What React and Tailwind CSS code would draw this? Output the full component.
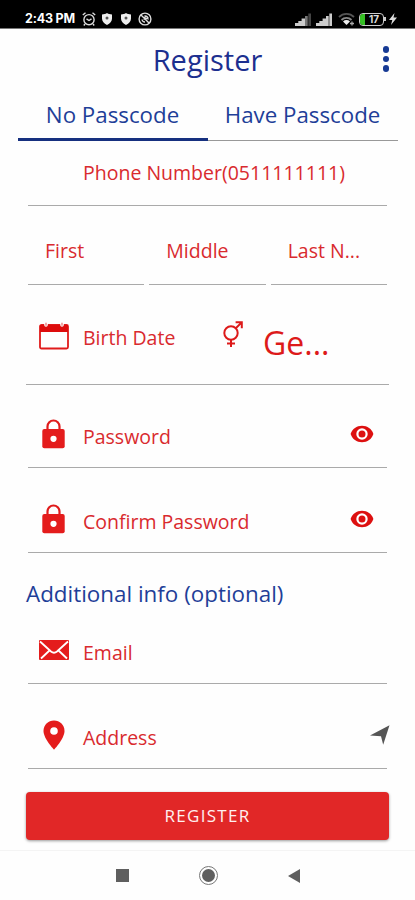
import React from 'react';
import { clsx } from 'clsx';

const CalendarIcon = () => (
  <svg viewBox="0 0 30 28" className="h-7 w-[30px]" fill="none">
    <rect x="1" y="3" width="28" height="23.5" rx="1.5" stroke="#e01b1b" strokeWidth="1.8" />
    <path d="M1 3h28v7H1z" fill="#dd0c0c" />
    <path d="M7 1v2M23 1v2" stroke="#fff" strokeWidth="3.6" strokeLinecap="round" />
    <path d="M7 1.2v2M23 1.2v2" stroke="#e46a6a" strokeWidth="1.2" strokeLinecap="round" />
  </svg>
);

const GenderIcon = () => (
  <svg viewBox="0 0 20 26" className="h-[26px] w-5" fill="none" stroke="#dd1a1a" strokeWidth="2">
    <circle cx="8" cy="12" r="6.7" />
    <path d="M12.8 7.2 18.4 1.6M12.6 1.2h6.2v6M8 18.8V26M4 22.5h8" />
  </svg>
);

const LockIcon = () => (
  <svg viewBox="0 0 23 30" className="h-[30px] w-[23px]">
    <path d="M5.5 11V7.5a6 6 0 0 1 12 0V11" fill="none" stroke="#e01b1b" strokeWidth="2.2" />
    <rect x="0.3" y="10" width="22.4" height="19.2" rx="2" fill="#e41c1c" />
    <circle cx="11.5" cy="19.8" r="3.1" fill="#fff" />
  </svg>
);

const EyeIcon = () => (
  <svg viewBox="0 0 24 18" className="h-[18px] w-6">
    <path d="M12 .8C6.6.8 2.4 3.8.6 9c1.800 5.200 6 8.200 11.400 8.200s9.600-3 11.400-8.200C21.600 3.800 17.400.8 12 .8z" fill="#dd1010" />
    <circle cx="12" cy="9" r="4.600" fill="#dd1010" stroke="#fff" strokeWidth="2.200" />
  </svg>
);

const MailIcon = () => (
  <svg viewBox="0 0 30 20" className="h-5 w-[30px]" fill="none">
    <rect width="30" height="20" rx="1" fill="#e41c1c" />
    <path d="M1 1.500 12 11.500q3 2.400 6 0L29 1.500M2 18.500l8.500-8M28 18.500l-8.500-8" stroke="#fff" strokeWidth="1.800" />
  </svg>
);

const PinIcon = () => (
  <svg viewBox="0 0 22 30" className="h-[30px] w-[22px]">
    <path
      d="M11 .5C5.200.5.500 5.100.500 10.900.500 18.500 11 29.600 11 29.600s10.500-11.100 10.500-18.700C21.500 5.100 16.800.500 11 .500z"
      fill="#e41c1c"
    />
    <circle cx="11" cy="11" r="3.800" fill="#fff" />
  </svg>
);

const SendIcon = () => (
  <svg viewBox="0 0 20 20" className="h-5 w-5">
    <path d="M19.500.3 0 10.600l11 .600 2.200 8.600z" fill="#555" />
  </svg>
);

const AlarmIcon = () => (
  <svg viewBox="0 0 14 14" className="h-3.5 w-3.5" fill="none" stroke="#ddd" strokeWidth="1.400">
    <circle cx="7" cy="7.700" r="5.100" />
    <path d="M.8 3 3.500.8M13.200 3 10.500.8M4.500 6.800 7 8.500l2.500-1.700M3 12l-1.200 1.500M11 12l1.200 1.500" />
  </svg>
);

const ShieldIcon = () => (
  <svg viewBox="0 0 10 12" className="h-3 w-2.5">
    <path d="M5 0C3.500 1 2 1.300 0 1.500v4C0 8.500 2 10.600 5 12c3-1.400 5-3.500 5-6.500v-4C8 1.300 6.500 1 5 0z" fill="#eee" />
    <circle cx="5" cy="5" r="1.500" fill="#555" />
  </svg>
);

const BlockedIcon = () => (
  <svg viewBox="0 0 14 14" className="h-3.5 w-3.5" fill="none" stroke="#ddd" strokeWidth="1.400">
    <circle cx="7" cy="7" r="5.900" />
    <path d="M3 3l8 8M4 7.500A3 3 0 0 0 7 10M6.500 4a3 3 0 0 1 3.500 3.500M7.500 3.500l-1 3.500 4-1" />
  </svg>
);

const SignalIcon = ({ weak = false }) => (
  <svg viewBox="0 0 17 13" className="h-[13px] w-[17px]" fill="#ccc">
    <path d="M0 10h3.300v3H0zM3.300 8h3.300v5H3.300zM6.600 5.500H10V13H6.600z" />
    <path d="M10 3h2.700v10H10z" fill={weak ? '#777' : '#ccc'} />
    <path d="M13.300.5H16V13h-2.700z" fill={weak ? '#444' : '#ccc'} />
  </svg>
);

const WifiIcon = () => (
  <svg viewBox="0 0 17 14" className="h-3.5 w-[17px]" fill="none">
    <path d="M1 5a10.500 10.500 0 0 1 15 0" stroke="#555" strokeWidth="1.800" />
    <path d="M3.500 8a7 7 0 0 1 10 0" stroke="#888" strokeWidth="1.800" />
    <path d="M5 9.500a5 5 0 0 1 7 0L8.500 13z" fill="#eee" />
    <path d="M12 11.500h4M14 9.500v4" stroke="#aaa" strokeWidth="1.300" />
  </svg>
);

const StatusBar = () => (
  <div className="flex h-[29px] items-end border-b border-[#777] bg-black pr-[18px] pb-px pl-[25px] text-white">
    <div className="flex h-4 items-center">
      <span className="w-[57px] font-['Inter'] text-[12.500px] leading-4 font-bold tracking-[-0.2px] whitespace-nowrap">2:43 PM</span>
      <AlarmIcon />
      <span className="ml-1.5 flex items-center gap-[9px]">
        <ShieldIcon />
        <ShieldIcon />
      </span>
      <span className="ml-[7px]">
        <BlockedIcon />
      </span>
    </div>
    <div className="ml-auto flex h-4 items-center">
      <SignalIcon weak />
      <span className="ml-1">
        <SignalIcon />
      </span>
      <span className="ml-[5px]">
        <WifiIcon />
      </span>
      <div className="ml-1 flex h-[13px] w-[25px] items-center overflow-hidden rounded-[4px] border-[1.500px] border-[#ccc]">
        <span className="h-full w-[5px] bg-[#35c024]" />
        <span className="flex-1 text-center font-['Inter'] text-[10px] leading-none font-bold text-[#ddd]">17</span>
      </div>
      <span className="h-1 w-0.5 bg-[#ccc]" />
      <svg viewBox="0 0 8 12" className="ml-[3px] h-3 w-2">
        <path d="M5.500 0 0 7h3.300L2 12l6-7.500H4.500z" fill="#ddd" />
      </svg>
    </div>
  </div>
);

const Header = () => (
  <header className="relative flex h-[62px] items-center justify-center text-[#1c2f8f]">
    <h1 className="pb-0.5 text-[29px] leading-none">Register</h1>
    <button className="absolute top-[17px] right-[26px] flex flex-col gap-[3px]" aria-label="Menu">
      <span className="h-[6.500px] w-[6.500px] rounded-full bg-[#163a94]" />
      <span className="h-[6.500px] w-[6.500px] rounded-full bg-[#163a94]" />
      <span className="h-[6.500px] w-[6.500px] rounded-full bg-[#163a94]" />
    </button>
  </header>
);

const Tab = ({ label, active = false }) => (
  <button
    className={clsx(
      'flex h-[50px] w-[190px] justify-center pt-3 text-[22.300px] leading-6',
      active ? 'border-b-[3px] border-[#16307f]' : 'border-b border-[#999]'
    )}
  >
    {label}
  </button>
);

// Campo con línea inferior
const Field = ({ icon, label, action, className }) => (
  <div className={clsx('mx-7 flex items-center border-b-[1.500px] border-[#aaa]', className)}>
    <span className="flex w-[51px] shrink-0 justify-center pb-[5px]">{icon}</span>
    <span className="ml-1 flex-1 whitespace-nowrap">{label}</span>
    {action}
  </div>
);

const NameField = ({ label }) => (
  <div className="flex flex-1 items-center border-b-[1.500px] border-[#aaa] pt-3 pl-[17px]">{label}</div>
);

export default function App() {
  return (
    <div className="flex h-[900px] w-[415px] flex-col overflow-hidden bg-[#fefefe] font-['Open_Sans',sans-serif]">
      <StatusBar />
      <Header />
      <nav className="flex justify-center text-[#1f3f98]">
        <Tab label="No Passcode" active />
        <Tab label="Have Passcode" />
      </nav>

      <form className="flex flex-col text-[19.500px] leading-6 text-[#d92a2e]">
        <Field label="Phone Number(0511111111)" className="h-[65px]" />

        <div className="mx-7 flex h-[79px] gap-[5px]">
          <NameField label="First" />
          <NameField label="Middle" />
          <NameField label="Last N..." />
        </div>

        <div className="mx-[26px] flex h-[100px] items-center border-b-[1.500px] border-[#aaa] pt-1.5">
          <span className="ml-[13px] w-[30px] pb-1">
            <CalendarIcon />
          </span>
          <span className="ml-3.5 w-[140px]">Birth Date</span>
          <span className="w-5 pb-2">
            <GenderIcon />
          </span>
          <span className="mt-2.5 ml-5 text-[32px] leading-none text-[#dd1a1a]">Ge...</span>
        </div>

        <Field icon={<LockIcon />} label="Password" action={<span className="mr-[13px] pb-[5px]"><EyeIcon /></span>} className="h-[83px] pt-[21px]" />
        <Field icon={<LockIcon />} label="Confirm Password" action={<span className="mr-[13px] pb-[5px]"><EyeIcon /></span>} className="h-[85px] pt-[23px]" />

        <h2 className="mt-[29px] ml-[26px] text-[22.400px] leading-6 text-[#1f3f98]">Additional info (optional)</h2>

        <Field icon={<MailIcon />} label="Email" className="h-[78px] pt-4" />
        <Field icon={<PinIcon />} label="Address" action={<span className="-mr-[3px] pb-1.5"><SendIcon /></span>} className="h-[85px] pt-[23px]" />

        <button
          type="button"
          className="mx-[26px] mt-[23px] h-12 rounded-[4px] bg-[#e12727] text-[17px] font-medium tracking-[1.300px] text-[#fff0f0] shadow-[0_1px_3px_rgba(0,0,0,0.4)]"
        >
          REGISTER
        </button>
      </form>

      <div className="mt-auto flex h-[50px] items-center justify-center border-t border-[#f4f4f4]">
        <span className="h-[13px] w-[13px] bg-[#5f5f5f]" />
        <span className="mx-[70px] flex h-[19px] w-[19px] items-center justify-center rounded-full border-[1.500px] border-[#777]">
          <span className="h-[13px] w-[13px] rounded-full bg-[#5f5f5f]" />
        </span>
        <svg viewBox="0 0 12 14" className="h-3.5 w-3">
          <path d="M12 0v14L0 7z" fill="#5f5f5f" />
        </svg>
      </div>
    </div>
  );
}
